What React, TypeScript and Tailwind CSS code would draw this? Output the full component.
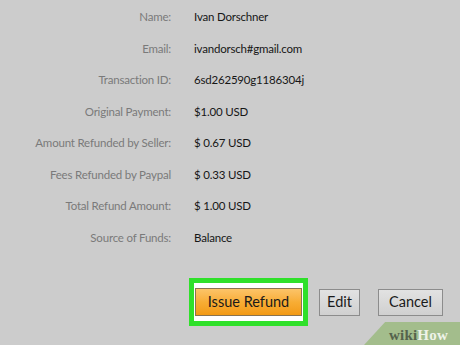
import React from 'react';

const rows: [string, string][] = [
  ['Name:', 'Ivan Dorschner'],
  ['Email:', 'ivandorsch#gmail.com'],
  ['Transaction ID:', '6sd262590g1186304j'],
  ['Original Payment:', '$1.00 USD'],
  ['Amount Refunded by Seller:', '$ 0.67 USD'],
  ['Fees Refunded by Paypal', '$ 0.33 USD'],
  ['Total Refund Amount:', '$ 1.00 USD'],
  ['Source of Funds:', 'Balance'],
];

const App = () => {
  return (
    <div
      className="relative w-[460px] h-[345px] overflow-hidden bg-[#cccccc]"
      style={{ fontFamily: 'Lato, "Open Sans", sans-serif' }}
    >
      <div className="pt-[1px]">
        {rows.map(([label, value]) => (
          <div key={label} className="flex items-center h-[31.5px] text-[11.5px] tracking-[-0.2px]">
            <div className="w-[171px] text-right text-[#7a7a7a]">{label}</div>
            <div className="pl-[23px] text-[#161616]">{value}</div>
          </div>
        ))}
      </div>

      <div className="flex items-center mt-[25px] pl-[189px]">
        <div className="border-[5px] border-[#2fe02a] bg-white px-[1px] py-[5px]">
          <button className="w-[107px] h-[28px] border border-[#8a7350] bg-gradient-to-b from-[#fcc468] via-[#f8ad34] to-[#f39a12] text-[14.5px] text-[#1a1a1a]">
            Issue Refund
          </button>
        </div>
        <button className="ml-[11px] w-[41px] h-[27px] border border-[#8c8c8c] bg-gradient-to-b from-[#e2e2e2] to-[#d0d0d0] text-[14.5px] text-[#1a1a1a]">
          Edit
        </button>
        <button className="ml-[18px] w-[65px] h-[27px] border border-[#8c8c8c] bg-gradient-to-b from-[#e2e2e2] to-[#d0d0d0] text-[14.5px] text-[#1a1a1a]">
          Cancel
        </button>
      </div>

      <div className="absolute right-0 bottom-0 w-[96px] h-[23px] bg-[#a3bd8c] [clip-path:polygon(22%_0,100%_0,100%_100%,0_100%)]">
        <div
          className="absolute left-[25px] top-[2px] text-[15px] font-bold tracking-[0.2px]"
          style={{ fontFamily: '"Liberation Serif", serif' }}
        >
          <span className="text-[#55634c]">wiki</span>
          <span className="text-[#eef3e8]">How</span>
        </div>
      </div>
    </div>
  );
};

export default App;
